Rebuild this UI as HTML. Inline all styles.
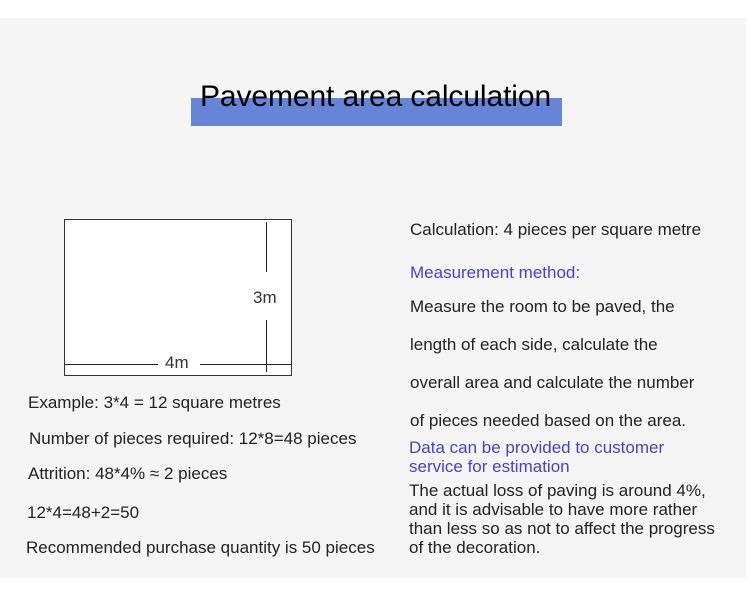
<!DOCTYPE html>
<html><head><meta charset="utf-8"><style>
*{margin:0;padding:0;box-sizing:border-box}
body{width:750px;height:606px;background:#fff;position:relative;overflow:hidden;font-family:"Liberation Sans","DejaVu Sans",sans-serif;color:#222}
#bg{position:absolute;left:0;top:18px;width:746px;height:560px;background:#f5f5f5}
.t{position:absolute;white-space:nowrap;font-size:17px;line-height:20px;height:20px}
.p{color:#4a3fd0}
</style></head><body>
<div id="bg"></div>
<div style="position:absolute;left:191px;top:98px;width:371px;height:28px;background:#6685d8"></div>
<div style="position:absolute;left:200px;top:80px;font-size:30px;line-height:34px;color:#000;white-space:nowrap;letter-spacing:-0.1px">Pavement area calculation</div>

<div style="position:absolute;left:64px;top:219px;width:228px;height:157px;background:#fff;border:1px solid #333"></div>
<div style="position:absolute;left:65px;top:364px;width:93px;height:1px;background:#222"></div>
<div style="position:absolute;left:200px;top:364px;width:91px;height:1px;background:#222"></div>
<div style="position:absolute;left:266px;top:222px;width:1px;height:50px;background:#222"></div>
<div style="position:absolute;left:266px;top:320px;width:1px;height:52px;background:#222"></div>
<div class="t" style="left:253px;top:288px;font-size:17px;color:#333">3m</div>
<div class="t" style="left:165px;top:353px;font-size:17px;color:#333">4m</div>

<div class="t" style="left:28px;top:393px">Example: 3*4 = 12 square metres</div>
<div class="t" style="left:29px;top:429px">Number of pieces required: 12*8=48 pieces</div>
<div class="t" style="left:28px;top:464px">Attrition: 48*4% ≈ 2 pieces</div>
<div class="t" style="left:27px;top:503px">12*4=48+2=50</div>
<div class="t" style="left:26px;top:538px">Recommended purchase quantity is 50 pieces</div>

<div class="t" style="left:410px;top:220px">Calculation: 4 pieces per square metre</div>
<div class="t p" style="left:410px;top:263px">Measurement method:</div>
<div class="t" style="left:410px;top:297px">Measure the room to be paved, the</div>
<div class="t" style="left:410px;top:335px">length of each side, calculate the</div>
<div class="t" style="left:410px;top:373px">overall area and calculate the number</div>
<div class="t" style="left:410px;top:411px">of pieces needed based on the area.</div>
<div class="t p" style="left:409px;top:438px">Data can be provided to customer</div>
<div class="t p" style="left:409px;top:457px">service for estimation</div>
<div class="t" style="left:409px;top:481px">The actual loss of paving is around 4%,</div>
<div class="t" style="left:409px;top:500px">and it is advisable to have more rather</div>
<div class="t" style="left:409px;top:519px">than less so as not to affect the progress</div>
<div class="t" style="left:409px;top:538px">of the decoration.</div>
</body></html>
